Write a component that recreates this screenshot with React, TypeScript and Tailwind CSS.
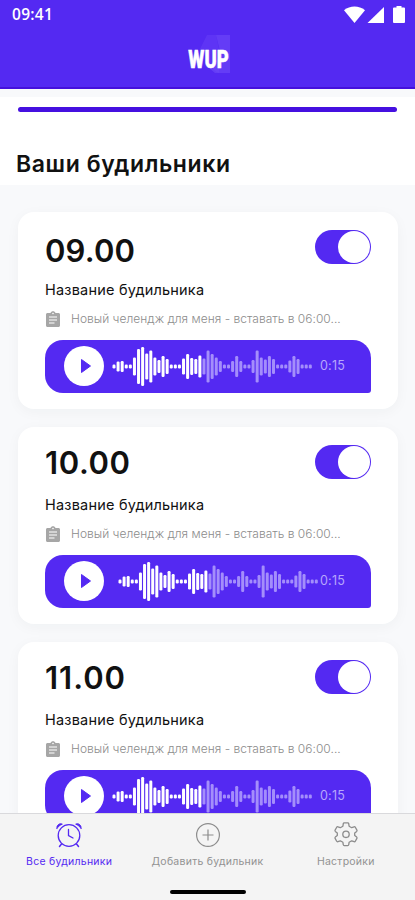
import { useState } from 'react';

type Alarm = {
  id: number;
  time: string;
  timeWidth: number;
  timeBaseline: number;
  waveShift: number;
};

const ALARMS: Alarm[] = [
  { id: 1, time: '09.00', timeWidth: 90, timeBaseline: 32, waveShift: 0 },
  { id: 2, time: '10.00', timeWidth: 85, timeBaseline: 29, waveShift: 6 },
  { id: 3, time: '11.00', timeWidth: 80, timeBaseline: 29, waveShift: 0 },
];

// Bar heights of the voice message, in pixels
const WAVE = [
  4, 10, 11, 4, 4, 18, 35, 39, 26, 32, 18, 13, 21, 15, 4, 4, 4, 16, 25, 17, 15, 22, 16, 32, 25,
  18, 11, 4, 4, 11, 21, 11, 4, 4, 13, 32, 18, 14, 21, 15, 4, 4, 4, 12, 21, 15, 4, 4, 4,
];
const PLAYED = 22;

const Logo = () => (
  <svg width="50" height="52" viewBox="0 0 50 52" className="ml-[11px] overflow-visible">
    <path d="M19 5h9l3 14V43c-8-3-9-10-14-17l-5-7z" fill="#6840f8" opacity="0.5" />
    <path d="M28 5h14v38H27l-6-5 12-13z" fill="#7450fa" opacity="0.5" />
    <text
      transform="scale(0.725 1)"
      x="0.5"
      y="38"
      fontFamily="Roboto, sans-serif"
      fontSize="25.5"
      fontWeight="900"
      fill="#fff"
      stroke="#fff"
      strokeWidth="0.500"
    >
      WUP
    </text>
  </svg>
);

const StatusIcons = () => (
  <svg width="62" height="18" viewBox="0 0 62 18" fill="#fff">
    <path d="M0 4.2C6-.8 15-.8 21 4.2L10.5 17z" />
    <path d="M40 1v16H23.500z" />
    <path d="M52.500 0h5v1.500h2.500q1 0 1 1V16q0 1-1 1H50q-1 0-1-1V2.500q0-1 1-1h2.500z" />
  </svg>
);

const ClipboardIcon = () => (
  <svg width="16" height="17" viewBox="0 0 16 17" fill="none">
    <path
      d="M2.500 2h3C5.900.7 6.800.2 8 .2s2.100.5 2.500 1.800h3c.8 0 1.500.7 1.500 1.500v11c0 .8-.7 1.500-1.500 1.500h-11C1.700 16 1 15.300 1 14.500v-11C1 2.700 1.700 2 2.500 2z"
      fill="#a6a6a6"
    />
    <circle cx="8" cy="2.500" r="0.800" fill="#fff" />
    <path d="M4 6h8M4 9h8M4 12h5.500" stroke="#fff" strokeWidth="1.200" />
  </svg>
);

const Waveform = () => (
  <svg width="202" height="42" viewBox="0 0 202 42">
    {WAVE.map((h, i) => (
      <rect
        key={i}
        x={0.5 + i * 4.09}
        y={20.5 - h / 2}
        width="3"
        height={h}
        rx="1.2"
        fill={i < PLAYED ? '#fff' : '#a48efb'}
      />
    ))}
  </svg>
);

const AlarmCard = ({ alarm }: { alarm: Alarm }) => {
  const [enabled, setEnabled] = useState(true);

  return (
    <li className="h-[197px] shrink-0 rounded-2xl bg-white px-[27px] pt-[18px] shadow-[0_3px_14px_rgba(30,40,60,0.04)]">
      <div className="flex h-[42px] items-start justify-between">
        <svg width="100" height="42" className="-ml-px">
          <text
            x="1"
            y={alarm.timeBaseline}
            fontFamily="Inter, sans-serif"
            fontSize="31"
            fontWeight="600"
            fill="#111"
            textLength={alarm.timeWidth}
          >
            {alarm.time}
          </text>
        </svg>
        <button
          onClick={() => setEnabled(!enabled)}
          className={`flex h-[34px] w-[56px] items-center rounded-full px-px ${
            enabled ? 'justify-end bg-[#5429f2]' : 'justify-start bg-gray-300'
          }`}
        >
          <span className="size-[32px] rounded-full bg-white" />
        </button>
      </div>
      <p className="mt-[8px] h-5 text-[14.500px] leading-5 tracking-[0.200px] text-[#111]">Название будильника</p>
      <div className="mt-[9px] flex h-5 items-center gap-[10px]">
        <ClipboardIcon />
        <span className="text-[12px] font-light leading-5 tracking-[0.020px] whitespace-nowrap text-[#8c8c8c]">
          Новый челендж для меня - вставать в 06:00...
        </span>
      </div>
      <div className="mt-[11px] flex h-[53px] items-center rounded-[18px] rounded-br-[3px] bg-[#5429f2] pl-5">
        <button className="-mt-px -ml-px flex size-10 shrink-0 items-center justify-center rounded-full bg-white">
          <svg width="10" height="14" viewBox="0 0 10 14" className="ml-[3px]">
            <path d="M.5.500l9 6.500-9 6.500z" fill="#5429f2" stroke="#5429f2" strokeLinejoin="round" />
          </svg>
        </button>
        <div className="ml-px w-[215px] shrink-0" style={{ paddingLeft: 7 + alarm.waveShift }}>
          <Waveform />
        </div>
        <span className="-mt-px text-[12.500px] leading-5 tracking-[0.200px] text-[#b7a6fc]">0:15</span>
      </div>
    </li>
  );
};

const AlarmIcon = () => (
  <svg width="28" height="26" viewBox="0 0 28 26" fill="none" stroke="#5429f2" strokeLinecap="round">
    <circle cx="14" cy="13.500" r="10.800" strokeWidth="1.300" />
    <path d="M13.500 7.500v6l4.500 2.500" strokeWidth="1.300" />
    <path d="M6.500 22l-2 2.500M21.500 22l2 2.500" strokeWidth="1.500" />
    <path d="M2 6.300C1.200 3.500 4.500.700 7.300 2.200 5 3 3.300 4.500 2 6.300z" fill="#5429f2" strokeWidth="1" />
    <path d="M26 6.300C26.800 3.500 23.500.700 20.700 2.200 23 3 24.700 4.500 26 6.300z" fill="#5429f2" strokeWidth="1" />
  </svg>
);

const PlusIcon = () => (
  <svg width="26" height="26" viewBox="0 0 26 26" fill="none" stroke="#8c8c8c" strokeWidth="1.200" className="ml-px">
    <circle cx="13" cy="13" r="11.400" />
    <path d="M13 7.500v11M7.500 13h11" />
  </svg>
);

const GearIcon = () => (
  <svg
    width="26"
    height="26"
    viewBox="0 0 26 26"
    fill="none"
    stroke="#8c8c8c"
    strokeWidth="1.300"
    strokeLinejoin="round"
    className="-mt-px mb-px"
  >
    <path d="M11.300 1.800h3.400q.9 0 1 .9l.4 2.500 2.600 1.500 2.400-.9q.8-.3 1.200.4l1.600 2.900q.4.700-.2 1.300l-2 1.500v2.700l2 1.500q.6.600.2 1.300l-1.600 2.900q-.4.700-1.200.4l-2.400-.9-2.600 1.500-.4 2.500q-.1.900-1 .9h-3.400q-.9 0-1-.9l-.4-2.500-2.600-1.500-2.400.9q-.8.300-1.200-.4l-1.600-2.900q-.4-.7.200-1.300l2-1.500v-2.700l-2-1.500q-.6-.6-.2-1.300l1.600-2.900q.4-.7 1.200-.4l2.400.9 2.600-1.500.4-2.500q.1-.9 1-.9z" />
    <circle cx="13" cy="13.300" r="3.200" />
  </svg>
);

const App = () => {
  return (
    <div className="flex h-[900px] w-full flex-col overflow-hidden bg-[#f8f9fb] font-['Inter',sans-serif]">
      <header className="h-[89px] shrink-0 border-b-2 border-[#4510dc] bg-[#5429f2]">
        <div className="flex h-[30px] items-center justify-between pr-[9px] pl-3">
          <span className="-mt-px font-['Open_Sans',sans-serif] text-[15.500px] font-semibold leading-none tracking-[0.300px] text-white">
            09:41
          </span>
          <div className="-mt-px">
            <StatusIcons />
          </div>
        </div>
        <div className="flex justify-center">
          <Logo />
        </div>
      </header>

      <section className="mt-2 h-[88px] shrink-0 bg-white px-[18px] pt-[10px]">
        <div className="h-[5px] rounded-full bg-[#4510e0]" />
        <h1 className="-ml-[2px] mt-[37px] text-[23px] font-semibold leading-[30px] tracking-[0.600px] text-[#111]">
          Ваши будильники
        </h1>
      </section>

      <main className="min-h-0 flex-1 overflow-hidden pt-[27px] pr-[17px] pl-[18px]">
        <ul className="flex flex-col gap-[18px]">
          {ALARMS.map((alarm) => (
            <AlarmCard key={alarm.id} alarm={alarm} />
          ))}
        </ul>
      </main>

      <footer className="flex h-[87px] shrink-0 flex-col border-t border-[#d9d9dc] bg-[#f4f4f4]">
        <nav className="grid grid-cols-3 pt-2 text-[10.500px] leading-4 tracking-[0.250px] text-[#929292]">
          <button className="flex flex-col items-center gap-[6px] text-[#5429f2]">
            <AlarmIcon />
            Все будильники
          </button>
          <button className="flex flex-col items-center gap-[6px]">
            <PlusIcon />
            Добавить будильник
          </button>
          <button className="flex flex-col items-center gap-[6px]">
            <GearIcon />
            Настройки
          </button>
        </nav>
        <div className="mx-auto mt-[20px] h-1 w-[76px] rounded-full bg-black" />
      </footer>
    </div>
  );
};

export default App;
